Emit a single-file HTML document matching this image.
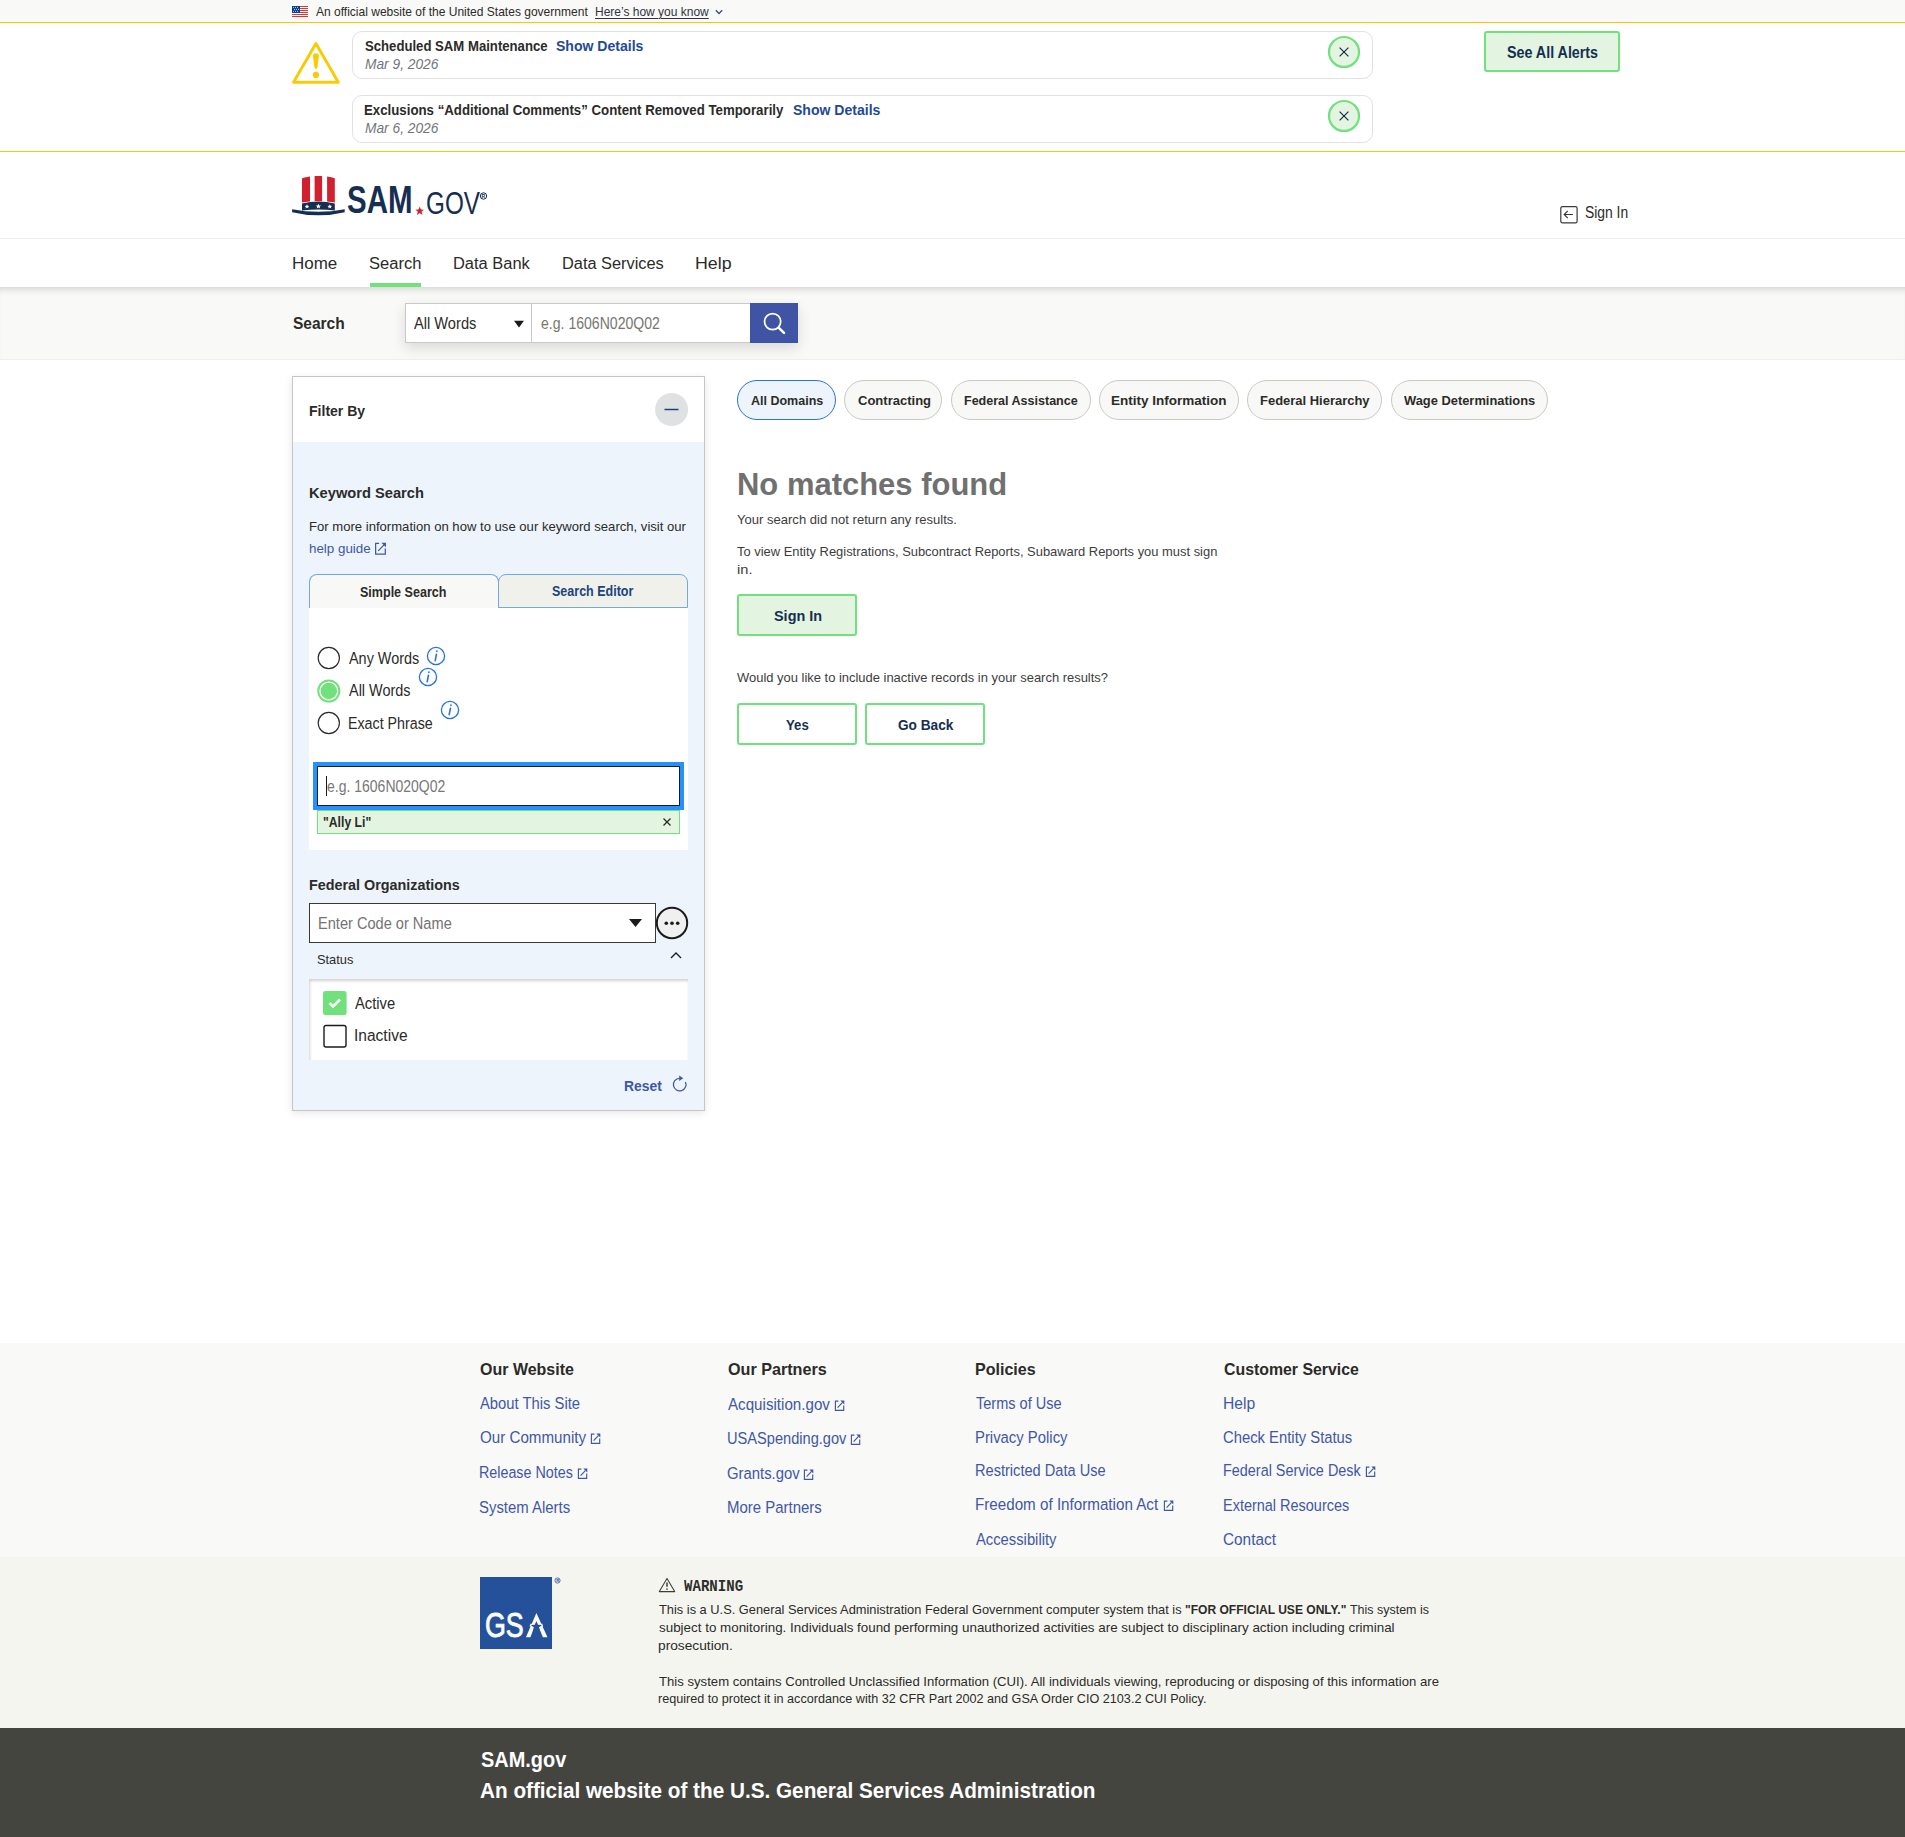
<!DOCTYPE html>
<html><head><meta charset="utf-8"><title>SAM.gov Search</title>
<style>
html,body{margin:0;padding:0;}
body{width:1905px;height:1837px;position:relative;overflow:hidden;background:#fff;font-family:'Liberation Sans',sans-serif;}
</style></head><body>
<div style="position:absolute;left:0px;top:0px;width:1905px;height:22px;background:#f9f9f7"></div>
<div style="position:absolute;left:0px;top:22px;width:1905px;height:1px;background:#f9c800"></div>
<div style="position:absolute;left:0px;top:151px;width:1905px;height:1px;background:#f9c800"></div>
<div style="position:absolute;left:0px;top:238px;width:1905px;height:1px;background:#efefeb"></div>
<div style="position:absolute;left:0px;top:287px;width:1905px;height:72px;background:#f9f9f7;box-shadow:inset 0 7px 7px -5px rgba(0,0,0,0.16)"></div>
<div style="position:absolute;left:0px;top:359px;width:1905px;height:1px;background:#efefec"></div>
<div style="position:absolute;left:0px;top:1343px;width:1905px;height:214px;background:#f9f9f7"></div>
<div style="position:absolute;left:0px;top:1557px;width:1905px;height:171px;background:#f5f5f0"></div>
<div style="position:absolute;left:0px;top:1728px;width:1905px;height:109px;background:#45453f"></div>
<svg style="position:absolute;left:292px;top:6px" width="16" height="11" viewBox="0 0 16 11">
<rect width="16" height="11" fill="#fff"/>
<g fill="#d83933"><rect y="0" width="16" height="1"/><rect y="2" width="16" height="1"/><rect y="4" width="16" height="1"/><rect y="6" width="16" height="1"/><rect y="8" width="16" height="1"/><rect y="10" width="16" height="1"/></g>
<rect width="8" height="7" fill="#0b3d91"/>
<g fill="#fff"><circle cx="1.5" cy="1.3" r=".5"/><circle cx="3.5" cy="1.3" r=".5"/><circle cx="5.5" cy="1.3" r=".5"/><circle cx="2.5" cy="3.3" r=".5"/><circle cx="4.5" cy="3.3" r=".5"/><circle cx="6.5" cy="3.3" r=".5"/><circle cx="1.5" cy="5.3" r=".5"/><circle cx="3.5" cy="5.3" r=".5"/><circle cx="5.5" cy="5.3" r=".5"/></g>
</svg>
<svg style="position:absolute;left:714px;top:8px" width="10" height="8" viewBox="0 0 10 8"><path d="M1.8 2.3 L5 5.5 L8.2 2.3" fill="none" stroke="#2f4a9a" stroke-width="1.25"/></svg>
<svg style="position:absolute;left:291px;top:41px" width="50" height="44" viewBox="0 0 50 44">
<path d="M24.9 2.5 L47.3 41.3 L2.5 41.3 Z" fill="none" stroke="#f9cb05" stroke-width="2.9" stroke-linejoin="round"/>
<path d="M21.9 15 Q21.9 12.2 24.9 12.2 Q27.9 12.2 27.9 15 L26.4 26.6 Q26.2 28 24.9 28 Q23.6 28 23.4 26.6 Z" fill="#f9cb05"/>
<circle cx="24.9" cy="33.9" r="3.1" fill="#f9cb05"/>
</svg>
<div style="position:absolute;left:352px;top:31px;width:1021px;height:48px;box-sizing:border-box;border:1px solid #dfe1e2;border-radius:10px;background:#fff"></div>
<div style="position:absolute;left:352px;top:95px;width:1021px;height:48px;box-sizing:border-box;border:1px solid #dfe1e2;border-radius:10px;background:#fff"></div>
<svg style="position:absolute;left:1327px;top:35px" width="34" height="34" viewBox="0 0 34 34">
<circle cx="17" cy="17" r="15" fill="#e3f5e1" stroke="#70e17b" stroke-width="2.2"/>
<path d="M12.6 12.6 L21.4 21.4 M21.4 12.6 L12.6 21.4" stroke="#162e51" stroke-width="1.25"/></svg>
<svg style="position:absolute;left:1327px;top:99px" width="34" height="34" viewBox="0 0 34 34">
<circle cx="17" cy="17" r="15" fill="#e3f5e1" stroke="#70e17b" stroke-width="2.2"/>
<path d="M12.6 12.6 L21.4 21.4 M21.4 12.6 L12.6 21.4" stroke="#162e51" stroke-width="1.25"/></svg>
<div style="position:absolute;left:1484px;top:31px;width:136px;height:41px;box-sizing:border-box;border:2px solid #70e17b;border-radius:3px;background:#e3f5e1"></div>
<svg style="position:absolute;left:290px;top:174px" width="200" height="44" viewBox="0 0 200 44">
<path d="M12 4.2 Q15.5 2.8 20 2.4 L20 27.5 L12 28.5 Z" fill="#d1202e"/>
<path d="M24.6 2 L32.1 2 L32.1 27.2 L24.6 27.2 Z" fill="#d1202e"/>
<path d="M37.1 2.4 Q41.5 2.8 44.8 4.2 L44.8 28.5 L37.1 27.5 Z" fill="#d1202e"/>
<path d="M12 29.5 Q28.4 25.5 44.8 29.5 L44.8 36.5 Q28.4 34.5 12 36.5 Z" fill="#162e51"/>
<path d="M2.1 35.2 Q28.4 40.5 54.7 35.2 L54.7 38.2 Q28.4 44.5 2.1 38.2 Z" fill="#162e51"/>
<g fill="#fff"><path d="M17 30.3 l0.7 1.5 1.6 0.1 -1.2 1 0.4 1.6 -1.5 -0.9 -1.5 0.9 0.4 -1.6 -1.2 -1 1.6 -0.1z"/><path d="M28.4 29.8 l0.8 1.7 1.8 0.1 -1.4 1.2 0.5 1.8 -1.7 -1 -1.7 1 0.5 -1.8 -1.4 -1.2 1.8 -0.1z"/><path d="M39.8 30.3 l0.7 1.5 1.6 0.1 -1.2 1 0.4 1.6 -1.5 -0.9 -1.5 0.9 0.4 -1.6 -1.2 -1 1.6 -0.1z"/></g>
<text x="57" y="38.9" font-family="Liberation Sans" font-weight="700" font-size="39.5" fill="#162e51" textLength="65.5" lengthAdjust="spacingAndGlyphs">SAM</text>
<path d="M129.7 32.6 L130.9 35.6 L134 35.7 L131.6 37.6 L132.5 40.9 L129.7 39 L126.9 40.9 L127.8 37.6 L125.4 35.7 L128.5 35.6 Z" fill="#d1202e"/>
<text x="136" y="39.5" font-family="Liberation Sans" font-weight="400" font-size="31" fill="#162e51" textLength="54" lengthAdjust="spacingAndGlyphs">GOV</text>
<circle cx="193.5" cy="22" r="3.2" fill="none" stroke="#162e51" stroke-width="1"/>
<text x="191.6" y="24" font-family="Liberation Sans" font-weight="700" font-size="5" fill="#162e51">R</text>
</svg>
<svg style="position:absolute;left:1559px;top:205px" width="20" height="20" viewBox="0 0 20 20">
<rect x="1.8" y="1.7" width="16.3" height="16.2" rx="1.6" fill="none" stroke="#3a3a37" stroke-width="1.2"/>
<path d="M14 9.5 L5.3 9.5 M8.8 5.9 L5.2 9.5 L8.8 13.1" fill="none" stroke="#3a3a37" stroke-width="1.2"/></svg>
<div style="position:absolute;left:370px;top:283px;width:51px;height:4px;background:#70e17b"></div>
<div style="position:absolute;left:405px;top:303px;width:393px;height:40px;box-shadow:0 5px 14px rgba(0,0,0,0.13)"></div>
<div style="position:absolute;left:405px;top:303px;width:127px;height:40px;box-sizing:border-box;background:#fff;border:1px solid #c9c9c9"></div>
<div style="position:absolute;left:531px;top:303px;width:220px;height:40px;box-sizing:border-box;background:#fff;border:1px solid #c9c9c9"></div>
<div style="position:absolute;left:750px;top:303px;width:48px;height:40px;background:#4054a6"></div>
<svg style="position:absolute;left:513px;top:320px" width="12" height="8" viewBox="0 0 12 8"><path d="M1 0.8 L11 0.8 L6 7.5 Z" fill="#1b1b1b"/></svg>
<svg style="position:absolute;left:762px;top:311px" width="26" height="26" viewBox="0 0 26 26"><circle cx="10.6" cy="10.6" r="8.1" fill="none" stroke="#fff" stroke-width="1.75"/><path d="M16.6 16.6 L22 21.8" stroke="#fff" stroke-width="2.5" stroke-linecap="round"/></svg>
<div style="position:absolute;left:292px;top:376px;width:413px;height:735px;box-sizing:border-box;border:1px solid #c6c6c6;background:#edf4fc;box-shadow:0 2px 8px rgba(0,0,0,0.10)"></div>
<div style="position:absolute;left:293px;top:377px;width:411px;height:65px;background:#fff"></div>
<svg style="position:absolute;left:655px;top:393px" width="34" height="34" viewBox="0 0 34 34"><circle cx="16.6" cy="16.5" r="16.5" fill="#dfe1e2"/><path d="M9.5 16.5 L23.5 16.5" stroke="#1a4480" stroke-width="1.5"/></svg>
<svg style="position:absolute;left:373.8px;top:542px" width="14" height="14" viewBox="0 0 12 12"><path d="M4.4 1.1 L1.4 1.1 L1.4 10.4 L9.7 10.4 L9.7 5.6" fill="none" stroke="#3f57a6" stroke-width="1.05"/><path d="M3.6 7.6 L8.6 2.4" stroke="#3f57a6" stroke-width="1.05"/><path d="M6.3 0.6 L10.3 0.6 L10.3 4.6 Z" fill="#3f57a6"/></svg>
<div style="position:absolute;left:309px;top:574px;width:190px;height:34px;box-sizing:border-box;background:#f8f8f6;border:1px solid #73a7e6;border-bottom:none;border-radius:8px 8px 0 0"></div>
<div style="position:absolute;left:498px;top:574px;width:190px;height:34px;box-sizing:border-box;background:#f1f1ec;border:1px solid #73a7e6;border-radius:8px 8px 0 0"></div>
<div style="position:absolute;left:309px;top:608px;width:379px;height:242px;background:#fff"></div>
<svg style="position:absolute;left:317px;top:646.0px" width="24" height="24" viewBox="0 0 24 24"><circle cx="11.8" cy="12" r="10.6" fill="#fff" stroke="#2b2b2b" stroke-width="1.15"/></svg>
<svg style="position:absolute;left:317px;top:678.6px" width="24" height="24" viewBox="0 0 24 24"><circle cx="11.8" cy="12" r="10.8" fill="#70e17b" stroke="#70e17b" stroke-width="1.4"/><circle cx="11.8" cy="12" r="8.9" fill="none" stroke="#fff" stroke-width="1.3"/></svg>
<svg style="position:absolute;left:317px;top:711.0px" width="24" height="24" viewBox="0 0 24 24"><circle cx="11.8" cy="12" r="10.6" fill="#fff" stroke="#2b2b2b" stroke-width="1.15"/></svg>
<svg style="position:absolute;left:426px;top:646px" width="20" height="20" viewBox="0 0 20 20"><circle cx="10" cy="10" r="8.6" fill="none" stroke="#2672de" stroke-width="1.3"/><path d="M10.9 5.2 l0 .1" stroke="#2672de" stroke-width="1.7" stroke-linecap="round"/><path d="M10.4 8.3 L9.2 14.6" stroke="#2672de" stroke-width="1.6" stroke-linecap="round"/></svg>
<svg style="position:absolute;left:418px;top:667px" width="20" height="20" viewBox="0 0 20 20"><circle cx="10" cy="10" r="8.6" fill="none" stroke="#2672de" stroke-width="1.3"/><path d="M10.9 5.2 l0 .1" stroke="#2672de" stroke-width="1.7" stroke-linecap="round"/><path d="M10.4 8.3 L9.2 14.6" stroke="#2672de" stroke-width="1.6" stroke-linecap="round"/></svg>
<svg style="position:absolute;left:440px;top:700px" width="20" height="20" viewBox="0 0 20 20"><circle cx="10" cy="10" r="8.6" fill="none" stroke="#2672de" stroke-width="1.3"/><path d="M10.9 5.2 l0 .1" stroke="#2672de" stroke-width="1.7" stroke-linecap="round"/><path d="M10.4 8.3 L9.2 14.6" stroke="#2672de" stroke-width="1.6" stroke-linecap="round"/></svg>
<div style="position:absolute;left:313px;top:762px;width:371px;height:48px;box-sizing:border-box;border:4px solid #2491ff;background:#fff"></div>
<div style="position:absolute;left:317px;top:766px;width:363px;height:40px;box-sizing:border-box;border:1.5px solid #1b1b1b"></div>
<div style="position:absolute;left:326px;top:776px;width:1.3999999999999773px;height:20px;background:#1b1b1b"></div>
<div style="position:absolute;left:317px;top:810px;width:363px;height:24px;box-sizing:border-box;border:1px solid #70e17b;background:#e3f5e1"></div>
<svg style="position:absolute;left:662px;top:817px" width="10" height="10" viewBox="0 0 10 10"><path d="M1.5 1.5 L8.5 8.5 M8.5 1.5 L1.5 8.5" stroke="#2b2b28" stroke-width="1.3"/></svg>
<div style="position:absolute;left:309px;top:903px;width:347px;height:40px;box-sizing:border-box;border:1.5px solid #3a3a35;background:#fff"></div>
<svg style="position:absolute;left:628px;top:918px" width="15" height="10" viewBox="0 0 15 10"><path d="M1 1 L14 1 L7.5 9 Z" fill="#1b1b1b"/></svg>
<svg style="position:absolute;left:655px;top:906px" width="34" height="34" viewBox="0 0 34 34"><circle cx="17" cy="17" r="15.2" fill="#f0f0f0" stroke="#1b1b1b" stroke-width="2"/><circle cx="11.3" cy="17.2" r="1.8" fill="#1b1b1b"/><circle cx="17" cy="17.2" r="1.8" fill="#1b1b1b"/><circle cx="22.7" cy="17.2" r="1.8" fill="#1b1b1b"/></svg>
<svg style="position:absolute;left:669px;top:950px" width="14" height="10" viewBox="0 0 14 10"><path d="M2 8 L7 3 L12 8" fill="none" stroke="#1b1b1b" stroke-width="1.3"/></svg>
<div style="position:absolute;left:309px;top:979px;width:379px;height:81px;background:#fff;box-shadow:inset 1px 2px 3px rgba(0,0,0,0.18)"></div>
<svg style="position:absolute;left:322px;top:990px" width="26" height="26" viewBox="0 0 26 26"><rect x="1" y="1" width="23.6" height="24" rx="2.5" fill="#70e17b"/><path d="M7.5 13 L11 16.5 L18 9.5" fill="none" stroke="#fff" stroke-width="2.6"/></svg>
<svg style="position:absolute;left:322px;top:1024px" width="26" height="26" viewBox="0 0 26 26"><rect x="2" y="1.5" width="22" height="21.5" rx="2" fill="#fff" stroke="#1b1b1b" stroke-width="1.4"/></svg>
<svg style="position:absolute;left:671px;top:1075px" width="18" height="18" viewBox="0 0 18 18"><path d="M14.4 6.9 A6.3 6.3 0 1 1 8.4 3.3" fill="none" stroke="#3f57a6" stroke-width="1.25"/><path d="M8.2 0.6 L12.2 3.3 L8.2 6 Z" fill="#3f57a6"/></svg>
<div style="position:absolute;left:737px;top:380px;width:99px;height:40px;box-sizing:border-box;border:1px solid #2672de;background:#eef4fb;border-radius:20px"></div>
<div style="position:absolute;left:844px;top:380px;width:98px;height:40px;box-sizing:border-box;border:1px solid #c9c9c5;background:#f8f8f6;border-radius:20px"></div>
<div style="position:absolute;left:951px;top:380px;width:140px;height:40px;box-sizing:border-box;border:1px solid #c9c9c5;background:#f8f8f6;border-radius:20px"></div>
<div style="position:absolute;left:1099px;top:380px;width:140px;height:40px;box-sizing:border-box;border:1px solid #c9c9c5;background:#f8f8f6;border-radius:20px"></div>
<div style="position:absolute;left:1247px;top:380px;width:135px;height:40px;box-sizing:border-box;border:1px solid #c9c9c5;background:#f8f8f6;border-radius:20px"></div>
<div style="position:absolute;left:1391px;top:380px;width:157px;height:40px;box-sizing:border-box;border:1px solid #c9c9c5;background:#f8f8f6;border-radius:20px"></div>
<div style="position:absolute;left:737px;top:594px;width:120px;height:42px;box-sizing:border-box;border:2px solid #70e17b;border-radius:3px;background:#e3f5e1"></div>
<div style="position:absolute;left:737px;top:703px;width:120px;height:42px;box-sizing:border-box;border:2px solid #70e17b;border-radius:3px;background:#fff"></div>
<div style="position:absolute;left:865px;top:703px;width:120px;height:42px;box-sizing:border-box;border:2px solid #70e17b;border-radius:3px;background:#fff"></div>
<svg style="position:absolute;left:590px;top:1433.4px" width="12" height="12" viewBox="0 0 12 12"><path d="M4.4 1.1 L1.4 1.1 L1.4 10.4 L9.7 10.4 L9.7 5.6" fill="none" stroke="#3f57a6" stroke-width="1.15"/><path d="M3.6 7.6 L8.6 2.4" stroke="#3f57a6" stroke-width="1.15"/><path d="M6.3 0.6 L10.3 0.6 L10.3 4.6 Z" fill="#3f57a6"/></svg>
<svg style="position:absolute;left:576.5px;top:1468px" width="12" height="12" viewBox="0 0 12 12"><path d="M4.4 1.1 L1.4 1.1 L1.4 10.4 L9.7 10.4 L9.7 5.6" fill="none" stroke="#3f57a6" stroke-width="1.15"/><path d="M3.6 7.6 L8.6 2.4" stroke="#3f57a6" stroke-width="1.15"/><path d="M6.3 0.6 L10.3 0.6 L10.3 4.6 Z" fill="#3f57a6"/></svg>
<svg style="position:absolute;left:834px;top:1399.6px" width="12" height="12" viewBox="0 0 12 12"><path d="M4.4 1.1 L1.4 1.1 L1.4 10.4 L9.7 10.4 L9.7 5.6" fill="none" stroke="#3f57a6" stroke-width="1.15"/><path d="M3.6 7.6 L8.6 2.4" stroke="#3f57a6" stroke-width="1.15"/><path d="M6.3 0.6 L10.3 0.6 L10.3 4.6 Z" fill="#3f57a6"/></svg>
<svg style="position:absolute;left:850.3px;top:1434px" width="12" height="12" viewBox="0 0 12 12"><path d="M4.4 1.1 L1.4 1.1 L1.4 10.4 L9.7 10.4 L9.7 5.6" fill="none" stroke="#3f57a6" stroke-width="1.15"/><path d="M3.6 7.6 L8.6 2.4" stroke="#3f57a6" stroke-width="1.15"/><path d="M6.3 0.6 L10.3 0.6 L10.3 4.6 Z" fill="#3f57a6"/></svg>
<svg style="position:absolute;left:803.2px;top:1468.5px" width="12" height="12" viewBox="0 0 12 12"><path d="M4.4 1.1 L1.4 1.1 L1.4 10.4 L9.7 10.4 L9.7 5.6" fill="none" stroke="#3f57a6" stroke-width="1.15"/><path d="M3.6 7.6 L8.6 2.4" stroke="#3f57a6" stroke-width="1.15"/><path d="M6.3 0.6 L10.3 0.6 L10.3 4.6 Z" fill="#3f57a6"/></svg>
<svg style="position:absolute;left:1162.7px;top:1499.8px" width="12" height="12" viewBox="0 0 12 12"><path d="M4.4 1.1 L1.4 1.1 L1.4 10.4 L9.7 10.4 L9.7 5.6" fill="none" stroke="#3f57a6" stroke-width="1.15"/><path d="M3.6 7.6 L8.6 2.4" stroke="#3f57a6" stroke-width="1.15"/><path d="M6.3 0.6 L10.3 0.6 L10.3 4.6 Z" fill="#3f57a6"/></svg>
<svg style="position:absolute;left:1364.5px;top:1466.3px" width="12" height="12" viewBox="0 0 12 12"><path d="M4.4 1.1 L1.4 1.1 L1.4 10.4 L9.7 10.4 L9.7 5.6" fill="none" stroke="#3f57a6" stroke-width="1.15"/><path d="M3.6 7.6 L8.6 2.4" stroke="#3f57a6" stroke-width="1.15"/><path d="M6.3 0.6 L10.3 0.6 L10.3 4.6 Z" fill="#3f57a6"/></svg>
<svg style="position:absolute;left:480px;top:1577px" width="84" height="73" viewBox="0 0 84 73">
<rect x="0" y="0" width="72" height="72" fill="#24519a"/>
<text x="4.9" y="60.2" font-family="Liberation Sans" font-weight="400" font-size="35" fill="#fbfbf7" stroke="#fbfbf7" stroke-width="0.9" textLength="38.8" lengthAdjust="spacingAndGlyphs">GS</text>
<path d="M45.9 60.2 L56.4 35.9 L67.5 60.2 L62.9 60.2 L56.4 44.5 L50.4 60.2 Z" fill="#fbfbf7"/>
<path d="M50.5 46.8 L62.3 46.8 L63.2 49.5 L49.5 49.5 Z" fill="#fbfbf7"/>
<path d="M56.4 44.2 l1.6 3.6 3.9 0.3 -3 2.5 1 3.8 -3.5 -2.1 -3.5 2.1 1 -3.8 -3 -2.5 3.9 -0.3z" fill="#24519a"/>
<circle cx="77.5" cy="3.5" r="2.6" fill="none" stroke="#24519a" stroke-width="0.8"/>
<text x="76.2" y="5.3" font-family="Liberation Sans" font-weight="700" font-size="4" fill="#24519a">R</text>
</svg>
<svg style="position:absolute;left:658px;top:1577px" width="18" height="16" viewBox="0 0 18 16"><path d="M9 1.4 L16.7 14.6 L1.3 14.6 Z" fill="none" stroke="#3d3d3a" stroke-width="1.05" stroke-linejoin="round"/><path d="M9 5.6 L9 9.8" stroke="#3d3d3a" stroke-width="1.5"/><circle cx="9" cy="12" r=".85" fill="#3d3d3a"/></svg>
<span style="position:absolute;left:316.0px;top:5.0px;white-space:pre;font-family:'Liberation Sans',sans-serif;font-weight:400;font-style:normal;font-size:13.14px;line-height:13.14px;color:#2b2b28;transform:scaleX(0.9158);transform-origin:0 0;">An official website of the United States government</span>
<span style="position:absolute;left:594.8px;top:5.0px;white-space:pre;font-family:'Liberation Sans',sans-serif;font-weight:400;font-style:normal;font-size:13.14px;line-height:13.14px;color:#2e3440;transform:scaleX(0.9137);transform-origin:0 0;text-decoration:underline;text-decoration-thickness:1px;text-underline-offset:2px">Here’s how you know</span>
<span style="position:absolute;left:365.3px;top:39.0px;white-space:pre;font-family:'Liberation Sans',sans-serif;font-weight:700;font-style:normal;font-size:14.29px;line-height:14.29px;color:#2b2b28;transform:scaleX(0.9202);transform-origin:0 0;">Scheduled SAM Maintenance</span>
<span style="position:absolute;left:556.3px;top:39.0px;white-space:pre;font-family:'Liberation Sans',sans-serif;font-weight:700;font-style:normal;font-size:14.29px;line-height:14.29px;color:#1f4a96;transform:scaleX(0.9831);transform-origin:0 0;">Show Details</span>
<span style="position:absolute;left:365.3px;top:57.0px;white-space:pre;font-family:'Liberation Sans',sans-serif;font-weight:400;font-style:italic;font-size:14.29px;line-height:14.29px;color:#71767a;transform:scaleX(0.9632);transform-origin:0 0;">Mar 9, 2026</span>
<span style="position:absolute;left:364.4px;top:103.0px;white-space:pre;font-family:'Liberation Sans',sans-serif;font-weight:700;font-style:normal;font-size:14.29px;line-height:14.29px;color:#2b2b28;transform:scaleX(0.9277);transform-origin:0 0;">Exclusions “Additional Comments” Content Removed Temporarily</span>
<span style="position:absolute;left:792.9px;top:103.0px;white-space:pre;font-family:'Liberation Sans',sans-serif;font-weight:700;font-style:normal;font-size:14.29px;line-height:14.29px;color:#1f4a96;transform:scaleX(0.9831);transform-origin:0 0;">Show Details</span>
<span style="position:absolute;left:365.3px;top:121.0px;white-space:pre;font-family:'Liberation Sans',sans-serif;font-weight:400;font-style:italic;font-size:14.29px;line-height:14.29px;color:#71767a;transform:scaleX(0.9632);transform-origin:0 0;">Mar 6, 2026</span>
<span style="position:absolute;left:1506.6px;top:45.0px;white-space:pre;font-family:'Liberation Sans',sans-serif;font-weight:700;font-style:normal;font-size:15.71px;line-height:15.71px;color:#162e51;transform:scaleX(0.9100);transform-origin:0 0;">See All Alerts</span>
<span style="position:absolute;left:1585.1px;top:205.0px;white-space:pre;font-family:'Liberation Sans',sans-serif;font-weight:400;font-style:normal;font-size:15.71px;line-height:15.71px;color:#2b2b28;transform:scaleX(0.8830);transform-origin:0 0;">Sign In</span>
<span style="position:absolute;left:291.7px;top:255.0px;white-space:pre;font-family:'Liberation Sans',sans-serif;font-weight:400;font-style:normal;font-size:17.29px;line-height:17.29px;color:#2b2b28;transform:scaleX(0.9822);transform-origin:0 0;">Home</span>
<span style="position:absolute;left:369.0px;top:255.0px;white-space:pre;font-family:'Liberation Sans',sans-serif;font-weight:400;font-style:normal;font-size:17.29px;line-height:17.29px;color:#2b2b28;transform:scaleX(0.9566);transform-origin:0 0;">Search</span>
<span style="position:absolute;left:453.0px;top:255.0px;white-space:pre;font-family:'Liberation Sans',sans-serif;font-weight:400;font-style:normal;font-size:17.29px;line-height:17.29px;color:#2b2b28;transform:scaleX(0.9513);transform-origin:0 0;">Data Bank</span>
<span style="position:absolute;left:561.8px;top:255.0px;white-space:pre;font-family:'Liberation Sans',sans-serif;font-weight:400;font-style:normal;font-size:17.29px;line-height:17.29px;color:#2b2b28;transform:scaleX(0.9462);transform-origin:0 0;">Data Services</span>
<span style="position:absolute;left:694.5px;top:255.0px;white-space:pre;font-family:'Liberation Sans',sans-serif;font-weight:400;font-style:normal;font-size:17.29px;line-height:17.29px;color:#2b2b28;transform:scaleX(1.0294);transform-origin:0 0;">Help</span>
<span style="position:absolute;left:292.6px;top:315.0px;white-space:pre;font-family:'Liberation Sans',sans-serif;font-weight:700;font-style:normal;font-size:17.14px;line-height:17.14px;color:#2b2b28;transform:scaleX(0.9053);transform-origin:0 0;">Search</span>
<span style="position:absolute;left:414.4px;top:315.0px;white-space:pre;font-family:'Liberation Sans',sans-serif;font-weight:400;font-style:normal;font-size:16.29px;line-height:16.29px;color:#2b2b28;transform:scaleX(0.8986);transform-origin:0 0;">All Words</span>
<span style="position:absolute;left:540.9px;top:315.0px;white-space:pre;font-family:'Liberation Sans',sans-serif;font-weight:400;font-style:normal;font-size:16.29px;line-height:16.29px;color:#76766f;transform:scaleX(0.8642);transform-origin:0 0;">e.g. 1606N020Q02</span>
<span style="position:absolute;left:308.6px;top:404.0px;white-space:pre;font-family:'Liberation Sans',sans-serif;font-weight:700;font-style:normal;font-size:14.43px;line-height:14.43px;color:#2b2b28;transform:scaleX(0.9737);transform-origin:0 0;">Filter By</span>
<span style="position:absolute;left:308.6px;top:486.0px;white-space:pre;font-family:'Liberation Sans',sans-serif;font-weight:700;font-style:normal;font-size:14.00px;line-height:14.00px;color:#2b2b28;transform:scaleX(1.0472);transform-origin:0 0;">Keyword Search</span>
<span style="position:absolute;left:308.6px;top:520.0px;white-space:pre;font-family:'Liberation Sans',sans-serif;font-weight:400;font-style:normal;font-size:13.14px;line-height:13.14px;color:#2b2b28;transform:scaleX(0.9976);transform-origin:0 0;">For more information on how to use our keyword search, visit our</span>
<span style="position:absolute;left:308.6px;top:542.0px;white-space:pre;font-family:'Liberation Sans',sans-serif;font-weight:400;font-style:normal;font-size:13.14px;line-height:13.14px;color:#3f57a6;transform:scaleX(1.0186);transform-origin:0 0;">help guide</span>
<span style="position:absolute;left:360.3px;top:585.0px;white-space:pre;font-family:'Liberation Sans',sans-serif;font-weight:700;font-style:normal;font-size:14.29px;line-height:14.29px;color:#2b2b28;transform:scaleX(0.8776);transform-origin:0 0;">Simple Search</span>
<span style="position:absolute;left:552.4px;top:584.0px;white-space:pre;font-family:'Liberation Sans',sans-serif;font-weight:700;font-style:normal;font-size:14.29px;line-height:14.29px;color:#1a4480;transform:scaleX(0.8763);transform-origin:0 0;">Search Editor</span>
<span style="position:absolute;left:349.3px;top:651.0px;white-space:pre;font-family:'Liberation Sans',sans-serif;font-weight:400;font-style:normal;font-size:16.71px;line-height:16.71px;color:#2b2b28;transform:scaleX(0.8642);transform-origin:0 0;">Any Words</span>
<span style="position:absolute;left:349.3px;top:683.0px;white-space:pre;font-family:'Liberation Sans',sans-serif;font-weight:400;font-style:normal;font-size:16.71px;line-height:16.71px;color:#2b2b28;transform:scaleX(0.8648);transform-origin:0 0;">All Words</span>
<span style="position:absolute;left:348.4px;top:716.0px;white-space:pre;font-family:'Liberation Sans',sans-serif;font-weight:400;font-style:normal;font-size:16.71px;line-height:16.71px;color:#2b2b28;transform:scaleX(0.8531);transform-origin:0 0;">Exact Phrase</span>
<span style="position:absolute;left:327.2px;top:778.0px;white-space:pre;font-family:'Liberation Sans',sans-serif;font-weight:400;font-style:normal;font-size:16.14px;line-height:16.14px;color:#777777;transform:scaleX(0.8684);transform-origin:0 0;">e.g. 1606N020Q02</span>
<span style="position:absolute;left:322.9px;top:815.0px;white-space:pre;font-family:'Liberation Sans',sans-serif;font-weight:700;font-style:normal;font-size:14.29px;line-height:14.29px;color:#2b2b28;transform:scaleX(0.8545);transform-origin:0 0;">"Ally Li"</span>
<span style="position:absolute;left:308.6px;top:878.0px;white-space:pre;font-family:'Liberation Sans',sans-serif;font-weight:700;font-style:normal;font-size:14.43px;line-height:14.43px;color:#2b2b28;transform:scaleX(0.9947);transform-origin:0 0;">Federal Organizations</span>
<span style="position:absolute;left:317.9px;top:916.0px;white-space:pre;font-family:'Liberation Sans',sans-serif;font-weight:400;font-style:normal;font-size:15.71px;line-height:15.71px;color:#737373;transform:scaleX(0.9287);transform-origin:0 0;">Enter Code or Name</span>
<span style="position:absolute;left:316.8px;top:953.0px;white-space:pre;font-family:'Liberation Sans',sans-serif;font-weight:400;font-style:normal;font-size:13.57px;line-height:13.57px;color:#2b2b28;transform:scaleX(0.9459);transform-origin:0 0;">Status</span>
<span style="position:absolute;left:355.4px;top:996.0px;white-space:pre;font-family:'Liberation Sans',sans-serif;font-weight:400;font-style:normal;font-size:15.57px;line-height:15.57px;color:#2b2b28;transform:scaleX(0.9476);transform-origin:0 0;">Active</span>
<span style="position:absolute;left:354.4px;top:1028.0px;white-space:pre;font-family:'Liberation Sans',sans-serif;font-weight:400;font-style:normal;font-size:15.57px;line-height:15.57px;color:#2b2b28;transform:scaleX(0.9981);transform-origin:0 0;">Inactive</span>
<span style="position:absolute;left:624.4px;top:1079.0px;white-space:pre;font-family:'Liberation Sans',sans-serif;font-weight:700;font-style:normal;font-size:14.29px;line-height:14.29px;color:#3f57a6;transform:scaleX(0.9737);transform-origin:0 0;">Reset</span>
<span style="position:absolute;left:750.7px;top:394.0px;white-space:pre;font-family:'Liberation Sans',sans-serif;font-weight:700;font-style:normal;font-size:13.14px;line-height:13.14px;color:#2b2b28;transform:scaleX(0.9526);transform-origin:0 0;">All Domains</span>
<span style="position:absolute;left:858.0px;top:394.0px;white-space:pre;font-family:'Liberation Sans',sans-serif;font-weight:700;font-style:normal;font-size:13.14px;line-height:13.14px;color:#2b2b28;transform:scaleX(0.9918);transform-origin:0 0;">Contracting</span>
<span style="position:absolute;left:963.8px;top:394.0px;white-space:pre;font-family:'Liberation Sans',sans-serif;font-weight:700;font-style:normal;font-size:13.14px;line-height:13.14px;color:#2b2b28;transform:scaleX(0.9542);transform-origin:0 0;">Federal Assistance</span>
<span style="position:absolute;left:1111.0px;top:394.0px;white-space:pre;font-family:'Liberation Sans',sans-serif;font-weight:700;font-style:normal;font-size:13.14px;line-height:13.14px;color:#2b2b28;transform:scaleX(1.0297);transform-origin:0 0;">Entity Information</span>
<span style="position:absolute;left:1260.0px;top:394.0px;white-space:pre;font-family:'Liberation Sans',sans-serif;font-weight:700;font-style:normal;font-size:13.14px;line-height:13.14px;color:#2b2b28;transform:scaleX(0.9882);transform-origin:0 0;">Federal Hierarchy</span>
<span style="position:absolute;left:1404.1px;top:394.0px;white-space:pre;font-family:'Liberation Sans',sans-serif;font-weight:700;font-style:normal;font-size:13.14px;line-height:13.14px;color:#2b2b28;transform:scaleX(0.9813);transform-origin:0 0;">Wage Determinations</span>
<span style="position:absolute;left:737.4px;top:469.0px;white-space:pre;font-family:'Liberation Sans',sans-serif;font-weight:700;font-style:normal;font-size:31.43px;line-height:31.43px;color:#707070;transform:scaleX(0.9856);transform-origin:0 0;">No matches found</span>
<span style="position:absolute;left:737.0px;top:513.0px;white-space:pre;font-family:'Liberation Sans',sans-serif;font-weight:400;font-style:normal;font-size:13.43px;line-height:13.43px;color:#3d3d3d;transform:scaleX(0.9720);transform-origin:0 0;">Your search did not return any results.</span>
<span style="position:absolute;left:737.1px;top:545.0px;white-space:pre;font-family:'Liberation Sans',sans-serif;font-weight:400;font-style:normal;font-size:13.43px;line-height:13.43px;color:#3d3d3d;transform:scaleX(0.9625);transform-origin:0 0;">To view Entity Registrations, Subcontract Reports, Subaward Reports you must sign</span>
<span style="position:absolute;left:736.8px;top:563.0px;white-space:pre;font-family:'Liberation Sans',sans-serif;font-weight:400;font-style:normal;font-size:13.43px;line-height:13.43px;color:#3d3d3d;transform:scaleX(1.0917);transform-origin:0 0;">in.</span>
<span style="position:absolute;left:773.7px;top:608.0px;white-space:pre;font-family:'Liberation Sans',sans-serif;font-weight:700;font-style:normal;font-size:15.29px;line-height:15.29px;color:#162e51;transform:scaleX(0.9440);transform-origin:0 0;">Sign In</span>
<span style="position:absolute;left:737.3px;top:671.0px;white-space:pre;font-family:'Liberation Sans',sans-serif;font-weight:400;font-style:normal;font-size:13.43px;line-height:13.43px;color:#3d3d3d;transform:scaleX(0.9644);transform-origin:0 0;">Would you like to include inactive records in your search results?</span>
<span style="position:absolute;left:786.3px;top:717.0px;white-space:pre;font-family:'Liberation Sans',sans-serif;font-weight:700;font-style:normal;font-size:15.29px;line-height:15.29px;color:#162e51;transform:scaleX(0.8615);transform-origin:0 0;">Yes</span>
<span style="position:absolute;left:897.6px;top:717.0px;white-space:pre;font-family:'Liberation Sans',sans-serif;font-weight:700;font-style:normal;font-size:15.29px;line-height:15.29px;color:#162e51;transform:scaleX(0.8935);transform-origin:0 0;">Go Back</span>
<span style="position:absolute;left:479.9px;top:1362.0px;white-space:pre;font-family:'Liberation Sans',sans-serif;font-weight:700;font-style:normal;font-size:16.57px;line-height:16.57px;color:#2b2b28;transform:scaleX(0.9660);transform-origin:0 0;">Our Website</span>
<span style="position:absolute;left:727.7px;top:1362.0px;white-space:pre;font-family:'Liberation Sans',sans-serif;font-weight:700;font-style:normal;font-size:16.57px;line-height:16.57px;color:#2b2b28;transform:scaleX(0.9752);transform-origin:0 0;">Our Partners</span>
<span style="position:absolute;left:975.0px;top:1362.0px;white-space:pre;font-family:'Liberation Sans',sans-serif;font-weight:700;font-style:normal;font-size:16.57px;line-height:16.57px;color:#2b2b28;transform:scaleX(0.9689);transform-origin:0 0;">Policies</span>
<span style="position:absolute;left:1223.8px;top:1362.0px;white-space:pre;font-family:'Liberation Sans',sans-serif;font-weight:700;font-style:normal;font-size:16.57px;line-height:16.57px;color:#2b2b28;transform:scaleX(0.9574);transform-origin:0 0;">Customer Service</span>
<span style="position:absolute;left:480.0px;top:1396.0px;white-space:pre;font-family:'Liberation Sans',sans-serif;font-weight:400;font-style:normal;font-size:15.71px;line-height:15.71px;color:#3f57a6;transform:scaleX(0.9415);transform-origin:0 0;">About This Site</span>
<span style="position:absolute;left:480.0px;top:1430.0px;white-space:pre;font-family:'Liberation Sans',sans-serif;font-weight:400;font-style:normal;font-size:15.71px;line-height:15.71px;color:#3f57a6;transform:scaleX(0.9645);transform-origin:0 0;">Our Community</span>
<span style="position:absolute;left:479.1px;top:1465.0px;white-space:pre;font-family:'Liberation Sans',sans-serif;font-weight:400;font-style:normal;font-size:15.71px;line-height:15.71px;color:#3f57a6;transform:scaleX(0.9108);transform-origin:0 0;">Release Notes</span>
<span style="position:absolute;left:479.1px;top:1500.0px;white-space:pre;font-family:'Liberation Sans',sans-serif;font-weight:400;font-style:normal;font-size:15.71px;line-height:15.71px;color:#3f57a6;transform:scaleX(0.9495);transform-origin:0 0;">System Alerts</span>
<span style="position:absolute;left:727.8px;top:1397.0px;white-space:pre;font-family:'Liberation Sans',sans-serif;font-weight:400;font-style:normal;font-size:15.71px;line-height:15.71px;color:#3f57a6;transform:scaleX(0.9651);transform-origin:0 0;">Acquisition.gov</span>
<span style="position:absolute;left:726.9px;top:1431.0px;white-space:pre;font-family:'Liberation Sans',sans-serif;font-weight:400;font-style:normal;font-size:15.71px;line-height:15.71px;color:#3f57a6;transform:scaleX(0.9305);transform-origin:0 0;">USASpending.gov</span>
<span style="position:absolute;left:726.9px;top:1466.0px;white-space:pre;font-family:'Liberation Sans',sans-serif;font-weight:400;font-style:normal;font-size:15.71px;line-height:15.71px;color:#3f57a6;transform:scaleX(0.9461);transform-origin:0 0;">Grants.gov</span>
<span style="position:absolute;left:726.8px;top:1500.0px;white-space:pre;font-family:'Liberation Sans',sans-serif;font-weight:400;font-style:normal;font-size:15.71px;line-height:15.71px;color:#3f57a6;transform:scaleX(0.9520);transform-origin:0 0;">More Partners</span>
<span style="position:absolute;left:976.1px;top:1396.0px;white-space:pre;font-family:'Liberation Sans',sans-serif;font-weight:400;font-style:normal;font-size:15.71px;line-height:15.71px;color:#3f57a6;transform:scaleX(0.9250);transform-origin:0 0;">Terms of Use</span>
<span style="position:absolute;left:975.2px;top:1430.0px;white-space:pre;font-family:'Liberation Sans',sans-serif;font-weight:400;font-style:normal;font-size:15.71px;line-height:15.71px;color:#3f57a6;transform:scaleX(0.9464);transform-origin:0 0;">Privacy Policy</span>
<span style="position:absolute;left:975.2px;top:1463.0px;white-space:pre;font-family:'Liberation Sans',sans-serif;font-weight:400;font-style:normal;font-size:15.71px;line-height:15.71px;color:#3f57a6;transform:scaleX(0.9295);transform-origin:0 0;">Restricted Data Use</span>
<span style="position:absolute;left:975.1px;top:1497.0px;white-space:pre;font-family:'Liberation Sans',sans-serif;font-weight:400;font-style:normal;font-size:15.71px;line-height:15.71px;color:#3f57a6;transform:scaleX(0.9672);transform-origin:0 0;">Freedom of Information Act</span>
<span style="position:absolute;left:976.1px;top:1532.0px;white-space:pre;font-family:'Liberation Sans',sans-serif;font-weight:400;font-style:normal;font-size:15.71px;line-height:15.71px;color:#3f57a6;transform:scaleX(0.9407);transform-origin:0 0;">Accessibility</span>
<span style="position:absolute;left:1222.9px;top:1396.0px;white-space:pre;font-family:'Liberation Sans',sans-serif;font-weight:400;font-style:normal;font-size:15.71px;line-height:15.71px;color:#3f57a6;transform:scaleX(0.9968);transform-origin:0 0;">Help</span>
<span style="position:absolute;left:1223.0px;top:1430.0px;white-space:pre;font-family:'Liberation Sans',sans-serif;font-weight:400;font-style:normal;font-size:15.71px;line-height:15.71px;color:#3f57a6;transform:scaleX(0.9434);transform-origin:0 0;">Check Entity Status</span>
<span style="position:absolute;left:1223.0px;top:1463.0px;white-space:pre;font-family:'Liberation Sans',sans-serif;font-weight:400;font-style:normal;font-size:15.71px;line-height:15.71px;color:#3f57a6;transform:scaleX(0.9174);transform-origin:0 0;">Federal Service Desk</span>
<span style="position:absolute;left:1223.0px;top:1498.0px;white-space:pre;font-family:'Liberation Sans',sans-serif;font-weight:400;font-style:normal;font-size:15.71px;line-height:15.71px;color:#3f57a6;transform:scaleX(0.9213);transform-origin:0 0;">External Resources</span>
<span style="position:absolute;left:1222.9px;top:1532.0px;white-space:pre;font-family:'Liberation Sans',sans-serif;font-weight:400;font-style:normal;font-size:15.71px;line-height:15.71px;color:#3f57a6;transform:scaleX(0.9774);transform-origin:0 0;">Contact</span>
<span style="position:absolute;left:683.6px;top:1579.0px;white-space:pre;font-family:'Liberation Mono',sans-serif;font-weight:700;font-style:normal;font-size:16.67px;line-height:16.67px;color:#2e2e2a;transform:scaleX(0.8457);transform-origin:0 0;">WARNING</span>
<span style="position:absolute;left:659.1px;top:1603.0px;white-space:pre;font-family:'Liberation Sans',sans-serif;font-weight:400;font-style:normal;font-size:13.57px;line-height:13.57px;color:#2b2b28;transform:scaleX(0.9458);transform-origin:0 0;">This is a U.S. General Services Administration Federal Government computer system that is</span>
<span style="position:absolute;left:1184.5px;top:1603.0px;white-space:pre;font-family:'Liberation Sans',sans-serif;font-weight:700;font-style:normal;font-size:13.57px;line-height:13.57px;color:#2b2b28;transform:scaleX(0.8883);transform-origin:0 0;">"FOR OFFICIAL USE ONLY."</span>
<span style="position:absolute;left:1349.7px;top:1603.0px;white-space:pre;font-family:'Liberation Sans',sans-serif;font-weight:400;font-style:normal;font-size:13.57px;line-height:13.57px;color:#2b2b28;transform:scaleX(0.9186);transform-origin:0 0;">This system is</span>
<span style="position:absolute;left:659.1px;top:1621.0px;white-space:pre;font-family:'Liberation Sans',sans-serif;font-weight:400;font-style:normal;font-size:13.57px;line-height:13.57px;color:#2b2b28;transform:scaleX(0.9876);transform-origin:0 0;">subject to monitoring. Individuals found performing unauthorized activities are subject to disciplinary action including criminal</span>
<span style="position:absolute;left:658.1px;top:1639.0px;white-space:pre;font-family:'Liberation Sans',sans-serif;font-weight:400;font-style:normal;font-size:13.57px;line-height:13.57px;color:#2b2b28;transform:scaleX(1.0125);transform-origin:0 0;">prosecution.</span>
<span style="position:absolute;left:659.1px;top:1675.0px;white-space:pre;font-family:'Liberation Sans',sans-serif;font-weight:400;font-style:normal;font-size:13.57px;line-height:13.57px;color:#2b2b28;transform:scaleX(0.9688);transform-origin:0 0;">This system contains Controlled Unclassified Information (CUI). All individuals viewing, reproducing or disposing of this information are</span>
<span style="position:absolute;left:658.2px;top:1692.0px;white-space:pre;font-family:'Liberation Sans',sans-serif;font-weight:400;font-style:normal;font-size:13.57px;line-height:13.57px;color:#2b2b28;transform:scaleX(0.9307);transform-origin:0 0;">required to protect it in accordance with 32 CFR Part 2002 and GSA Order CIO 2103.2 CUI Policy.</span>
<span style="position:absolute;left:480.5px;top:1749.0px;white-space:pre;font-family:'Liberation Sans',sans-serif;font-weight:700;font-style:normal;font-size:22.00px;line-height:22.00px;color:#fff;transform:scaleX(0.9064);transform-origin:0 0;">SAM.gov</span>
<span style="position:absolute;left:479.8px;top:1780.0px;white-space:pre;font-family:'Liberation Sans',sans-serif;font-weight:700;font-style:normal;font-size:22.00px;line-height:22.00px;color:#fff;transform:scaleX(0.9422);transform-origin:0 0;">An official website of the U.S. General Services Administration</span>
</body></html>
